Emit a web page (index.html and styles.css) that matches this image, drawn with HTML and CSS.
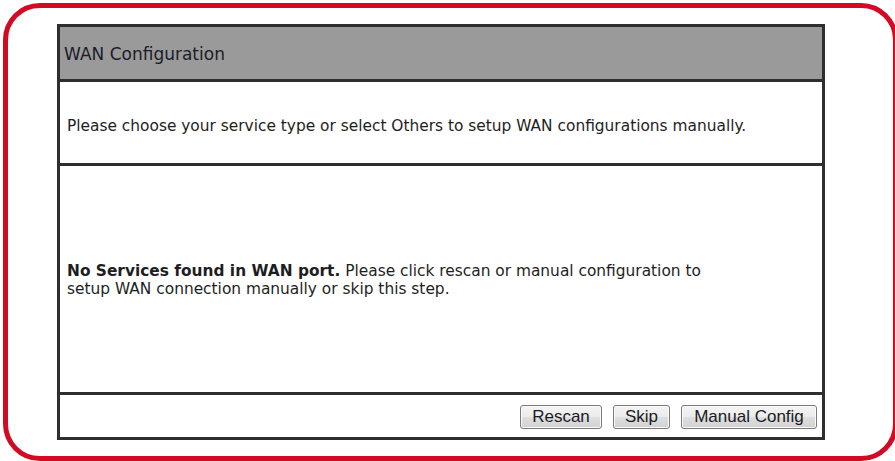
FILE: index.html
```html
<!DOCTYPE html>
<html lang="en">
<head>
<meta charset="utf-8">
<title>WAN Configuration</title>
<link rel="stylesheet" href="styles.css">
</head>
<body>
<div class="frame">
  <div class="panel">
    <div class="panel-header">WAN Configuration</div>
    <div class="panel-intro">Please choose your service type or select Others to setup WAN configurations manually.</div>
    <div class="panel-body">
      <p class="status"><b>No Services found in WAN port.</b> Please click rescan or manual configuration to<br>setup WAN connection manually or skip this step.</p>
    </div>
    <div class="panel-footer">
      <button class="btn btn-rescan">Rescan</button>
      <button class="btn btn-skip">Skip</button>
      <button class="btn btn-manual">Manual Config</button>
    </div>
  </div>
</div>
</body>
</html>
```
FILE: styles.css
```css
html, body {
  margin: 0;
  padding: 0;
  background: #ffffff;
  overflow: hidden;
}

body {
  width: 895px;
  height: 461px;
  font-family: "DejaVu Sans", Verdana, sans-serif;
  color: #1e1e22;
}

.frame {
  box-sizing: border-box;
  width: 895px;
  height: 458px;
  margin: 3px 0 0 3px;
  border: 5px solid #d20a24;
  border-radius: 37px;
  padding: 16px 0 0 49px;
}

.panel {
  box-sizing: border-box;
  width: 768px;
  height: 416px;
  border: 3px solid #2e2e2e;
  display: flex;
  flex-direction: column;
}

.panel-header {
  box-sizing: border-box;
  flex: none;
  height: 55px;
  background: #9a9a9a;
  border-bottom: 3px solid #2e2e2e;
  display: flex;
  align-items: center;
  padding: 2px 0 0 4px;
  font-size: 17px;
  color: #1c1c2a;
}

.panel-intro {
  box-sizing: border-box;
  flex: none;
  height: 84px;
  border-bottom: 3px solid #2e2e2e;
  display: flex;
  align-items: center;
  padding: 6px 0 0 7px;
  font-size: 15.4px;
}

.panel-body {
  box-sizing: border-box;
  flex: none;
  height: 229px;
  border-bottom: 3px solid #2e2e2e;
  display: flex;
  align-items: center;
  padding: 2px 0 0 7px;
}

.status {
  margin: 0;
  font-size: 15.4px;
  line-height: 18px;
}

.panel-footer {
  flex: 1;
  display: flex;
  justify-content: flex-end;
  align-items: center;
  gap: 11px;
  padding: 2px 5px 0 0;
}

.btn {
  box-sizing: border-box;
  height: 24px;
  border: 1px solid #7a7a7a;
  border-radius: 3px;
  background: linear-gradient(to bottom, #f4f4f4 0%, #ececec 48%, #dedede 52%, #d2d2d2 100%);
  font-family: "Liberation Sans", Arial, sans-serif;
  font-size: 17px;
  color: #1a1a24;
  padding: 0;
  line-height: 20px;
  box-shadow: inset 0 0 0 1px #fbfbfb;
}

.btn-rescan { width: 82px; }
.btn-skip { width: 57px; }
.btn-manual { width: 136px; }
```
